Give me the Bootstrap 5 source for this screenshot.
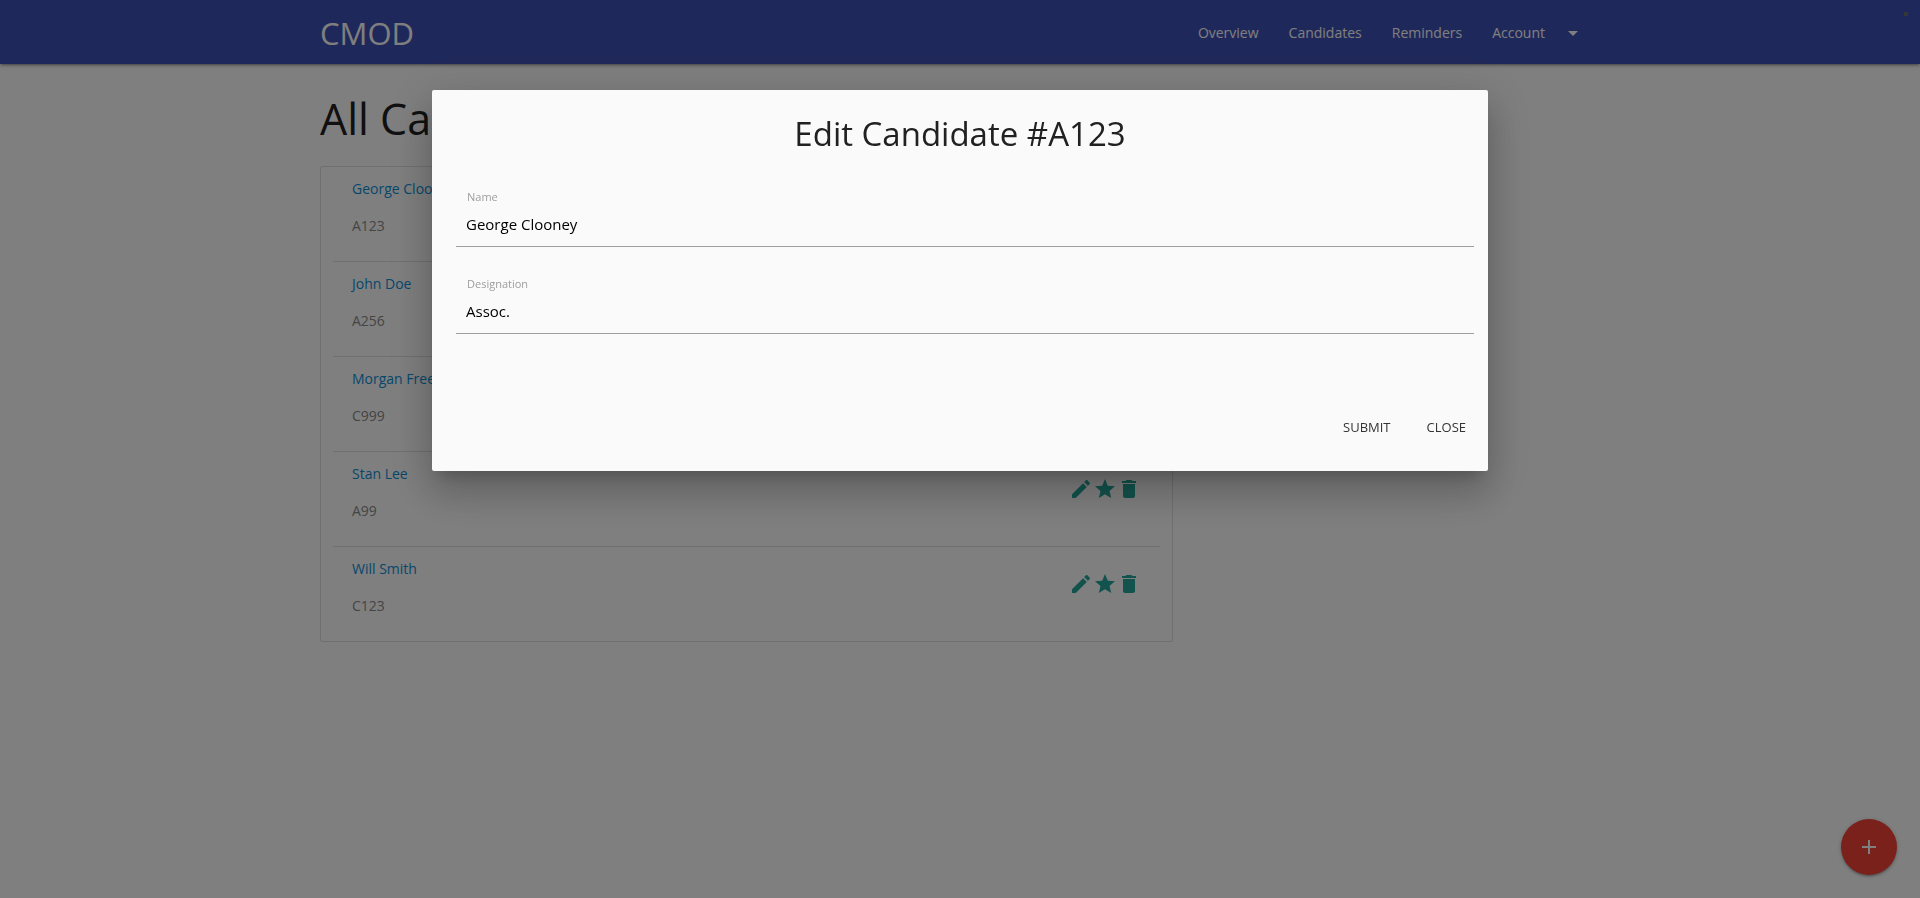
<!DOCTYPE html>
<html lang="en">
<head>
<meta charset="utf-8">
<meta name="viewport" content="width=device-width, initial-scale=1">
<title>CMOD - All Candidates</title>
<link href="https://cdn.jsdelivr.net/npm/bootstrap@5.3.0/dist/css/bootstrap.min.css" rel="stylesheet">
<style>
  body { font-family: "Segoe UI", "Open Sans", "Noto Sans", sans-serif; font-size: 15px; line-height: 22px; color: #212121; background: #fff; }
  .page-width { width: 70%; max-width: 1280px; margin: 0 auto; }
  .topbar { background: #3f51b5; height: 64px; box-shadow: 0 2px 2px 0 rgba(0,0,0,.14), 0 3px 1px -2px rgba(0,0,0,.12), 0 1px 5px 0 rgba(0,0,0,.2); }
  .topbar a { color: #fff; text-decoration: none; }
  .topbar .brand { font-size: 31px; line-height: 66px; }
  .topbar .links a { font-size: 14px; line-height: 66px; padding: 0 15px; }
  .topbar .links a:last-child { height: 66px; }
  .corner-dot { width: 4px; height: 4px; top: 12px; right: 12px; background: #6c6c70; }
  .page-title { font-size: 43px; font-weight: 400; line-height: 48px; margin: 31px 0 23px; }
  .people { border: 1px solid #e0e0e0; border-radius: 2px; padding: 0 12px; }
  .person { height: 95px; padding: 11px 19px 0; font-size: 14px; border-bottom: 1px solid #e0e0e0; }
  .person:last-child { height: 94px; border-bottom: 0; }
  .person a { color: #0d8fd6; text-decoration: none; }
  .person .code { color: #8a8a8a; margin-top: 15px; }
  .person .actions { padding-top: 14px; }
  .icon-btn { border: 0; background: none; padding: 0; width: 24px; height: 24px; color: #26a69a; display: block; }
  .icon-btn svg, .fab svg { display: block; fill: currentColor; }
  .fab { width: 56px; height: 56px; right: 23px; bottom: 23px; border: 0; background: #f44336; color: #fff; box-shadow: 0 2px 2px 0 rgba(0,0,0,.14), 0 3px 1px -2px rgba(0,0,0,.12), 0 1px 5px 0 rgba(0,0,0,.2); }
  .edit-dialog { max-width: 55%; margin: 10vh auto; }
  .edit-dialog .modal-content { background: #fafafa; border: 0; border-radius: 2px; color: #212121; box-shadow: 0 24px 38px 3px rgba(0,0,0,.14), 0 9px 46px 8px rgba(0,0,0,.12), 0 11px 15px -7px rgba(0,0,0,.2); }
  .edit-dialog .modal-body { padding: 24px 14px 0 24px; }
  .edit-dialog h4 { font-size: 33px; font-weight: 400; line-height: 40px; margin: 0 10px 35px 0; text-align: center; }
  .field { margin-bottom: 29px; }
  .field label { display: block; font-size: 11px; line-height: 16px; color: #9e9e9e; padding-left: 11px; }
  .field input { display: block; width: 100%; height: 42px; border: 0; border-bottom: 1px solid #9e9e9e; border-radius: 0; background: transparent; padding: 0 10px 3px; font-size: 15px; color: #000; outline: 0; }
  .dialog-actions { padding: 46px 7px 26px; gap: 6px; }
  .flat-btn { border: 0; background: none; height: 36px; line-height: 36px; padding: 0 15px; font-size: 13px; color: #343434; text-transform: uppercase; }
</style>
</head>
<body>
<nav class="topbar position-relative">
  <div class="page-width d-flex justify-content-between">
    <a class="brand" href="#">CMOD</a>
    <div class="links d-flex">
      <a href="#">Overview</a>
      <a href="#">Candidates</a>
      <a href="#">Reminders</a>
      <a href="#" class="d-flex align-items-center">Account
        <svg class="ms-3" width="24" height="24" viewBox="0 0 24 24" fill="#fff" aria-hidden="true"><path d="M7 10l5 5 5-5z"/></svg>
      </a>
    </div>
  </div>
  <span class="corner-dot position-absolute"></span>
</nav>

<main class="page-width">
  <h3 class="page-title">All Candidates</h3>
  <div class="row g-0">
    <div class="col-8">
      <div class="people" id="people"></div>
    </div>
  </div>
</main>

<button class="fab position-fixed rounded-circle d-flex align-items-center justify-content-center" type="button" aria-label="Add candidate">
  <svg width="24" height="24" viewBox="0 0 24 24"><path d="M19 13h-6v6h-2v-6H5v-2h6V5h2v6h6v2z"/></svg>
</button>

<div class="modal-backdrop show"></div>
<div class="modal d-block" tabindex="-1" role="dialog" aria-labelledby="dialogTitle">
  <div class="modal-dialog edit-dialog">
    <form class="modal-content">
      <div class="modal-body">
        <h4 id="dialogTitle">Edit Candidate #A123</h4>
        <div class="field">
          <label for="name">Name</label>
          <input id="name" type="text" value="George Clooney">
        </div>
        <div class="field">
          <label for="designation">Designation</label>
          <input id="designation" type="text" value="Assoc.">
        </div>
      </div>
      <div class="dialog-actions d-flex justify-content-end">
        <button class="flat-btn" type="button">Submit</button>
        <button class="flat-btn" type="button">Close</button>
      </div>
    </form>
  </div>
</div>

<script src="https://cdn.jsdelivr.net/npm/bootstrap@5.3.0/dist/js/bootstrap.bundle.min.js"></script>
<script>
  const people = [["George Clooney", "A123"], ["John Doe", "A256"], ["Morgan Freeman", "C999"], ["Stan Lee", "A99"], ["Will Smith", "C123"]];
  const icons = {
    Edit: "M3 17.25V21h3.75L17.81 9.94l-3.75-3.75L3 17.25zM20.71 7.04c.39-.39.39-1.02 0-1.41l-2.34-2.34c-.39-.39-1.02-.39-1.41 0l-1.83 1.83 3.75 3.75 1.83-1.83z",
    Star: "M12 17.27L18.18 21l-1.64-7.03L22 9.24l-7.19-.61L12 2 9.19 8.63 2 9.24l5.46 4.73L5.82 21z",
    Delete: "M6 19c0 1.1.9 2 2 2h8c1.1 0 2-.9 2-2V7H6v12zM19 4h-3.5l-1-1h-5l-1 1H5v2h14V4z"
  };
  const buttons = Object.entries(icons).map(([label, d]) =>
    `<button class="icon-btn" type="button" aria-label="${label}"><svg width="24" height="24" viewBox="0 0 24 24"><path d="${d}"/></svg></button>`).join("");
  document.getElementById("people").innerHTML = people.map(([name, code]) =>
    `<div class="person d-flex justify-content-between"><div><a href="#">${name}</a><div class="code">${code}</div></div><div class="actions d-flex">${buttons}</div></div>`).join("");
</script>
</body>
</html>
